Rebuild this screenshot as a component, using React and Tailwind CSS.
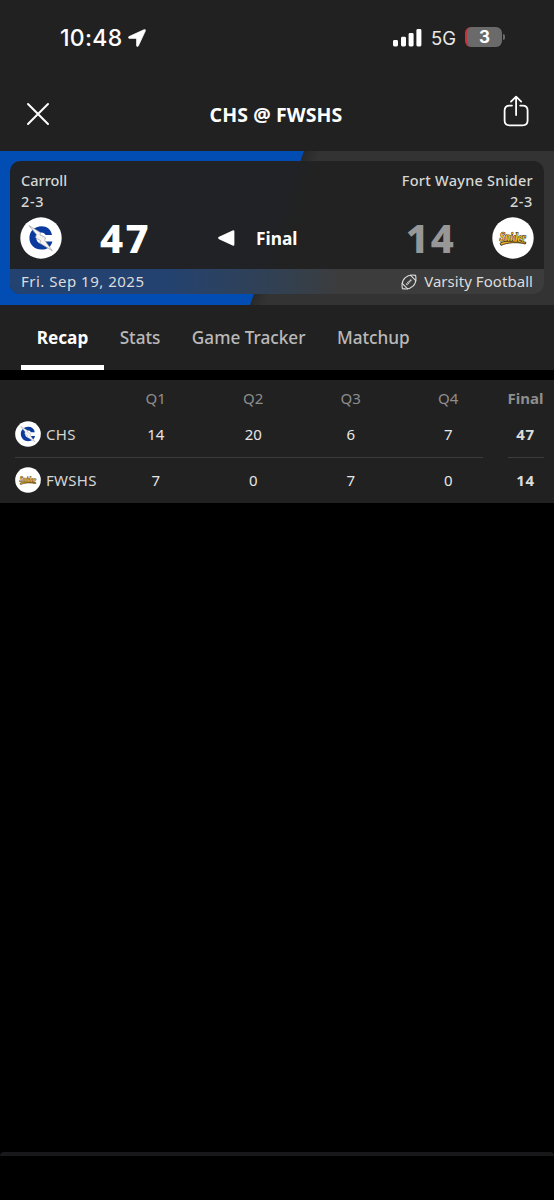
import React from 'react';

const TABS = ['Recap', 'Stats', 'Game Tracker', 'Matchup'];

const QUARTERS = ['Q1', 'Q2', 'Q3', 'Q4'];

const TEAMS = [
  { id: 'chs', short: 'CHS', quarters: [14, 20, 6, 7], final: 47 },
  { id: 'fwshs', short: 'FWSHS', quarters: [7, 0, 7, 0], final: 14 },
];

function CarrollLogo({ className }) {
  return (
    <svg viewBox="0 0 42 42" className={className}>
      <circle cx="21" cy="21" r="20.7" fill="#fff" />
      <path
        d="M32 18C31 12.4 27 9.3 21.6 9.3C14.6 9.3 9.4 14.3 9.4 21C9.4 27.7 14.6 32.6 21.6 32.6C27 32.6 31.2 29.6 32.4 24.4H25.4C24.6 25.8 23.4 26.6 21.6 26.6C18.6 26.6 16.4 24.2 16.4 21C16.4 17.8 18.6 15.4 21.6 15.4C23.4 15.4 24.8 16.4 25.6 18Z"
        fill="#0b3a9e"
      />
      <path
        d="M9 8.6L20.4 15.4L20 17.8L25.4 20.6L24.8 23.4L32.4 33.8L19.8 26.2L20.6 23.6L15.4 20.6L16.4 17.6Z"
        fill="#f4f4f2"
        stroke="#8d8f94"
        strokeWidth="0.6"
        strokeLinejoin="round"
      />
    </svg>
  );
}

function SniderLogo({ className }) {
  return (
    <svg viewBox="0 0 42 42" className={className}>
      <circle cx="21" cy="21" r="20.7" fill="#fff" />
      <path
        d="M8 26.2C14 22.8 26 22.6 34 25.4L33.4 27C25 24.8 15.5 25.4 9 28.4Z"
        fill="#e9ac26"
        stroke="#2b2110"
        strokeWidth="0.8"
      />
      <g
        transform="rotate(3 21 21)"
        fontFamily="'Liberation Serif', serif"
        fontStyle="italic"
        fontWeight="700"
        fill="#f7be2c"
        stroke="#2b2110"
        strokeWidth="1.1"
        strokeLinejoin="round"
        paintOrder="stroke"
      >
        <text x="7.6" y="24.4" fontSize="13" textLength="26" lengthAdjust="spacingAndGlyphs">
          Snider
        </text>
      </g>
    </svg>
  );
}

function TeamLogo({ team, className }) {
  return team === 'chs' ? <CarrollLogo className={className} /> : <SniderLogo className={className} />;
}

function StatusBar() {
  return (
    <div className="flex h-[76px] items-center justify-between pl-[60px] pr-[49px] font-['Inter',sans-serif] text-white">
      <div className="flex items-center gap-[6px]">
        <span className="pt-px text-[23px] font-medium leading-none tracking-[0.3px]">10:48</span>
        <svg viewBox="0 0 18 18" className="h-[18px] w-[18px]">
          <path
            d="M16.2 0.6L0.9 7.6C0 8.1 0.3 9.4 1.3 9.4H7.9Q8.5 9.4 8.5 10V16.5C8.5 17.7 9.9 17.9 10.4 16.9L17.4 1.9C17.8 0.9 17.1 0.2 16.2 0.6Z"
            fill="currentColor"
            stroke="currentColor"
            strokeWidth="0.6"
          />
        </svg>
      </div>
      <div className="flex items-center">
        <svg viewBox="0 0 29 18" className="h-[18px] w-[29px]" fill="currentColor">
          <rect x="0" y="11" width="5" height="6.5" rx="1.4" />
          <rect x="8" y="7.8" width="5" height="9.7" rx="1.4" />
          <rect x="15.6" y="4" width="5" height="13.5" rx="1.4" />
          <rect x="23.4" y="0" width="5" height="17.5" rx="1.4" />
        </svg>
        <span className="ml-[9px] pt-px text-[18.5px] leading-none text-[#e8e8e8]">5G</span>
        <div className="ml-[9px] flex items-center gap-px">
          <div className="mb-[2px] flex h-[20px] w-[37px] items-center justify-center overflow-hidden rounded-[6px] border-l-2 border-[#c8323a] bg-[#6a6a6a] text-[17px] font-bold leading-none">
            3
          </div>
          <div className="mb-[2px] h-[6px] w-[2px] rounded-r-full bg-[#6a6a6a]" />
        </div>
      </div>
    </div>
  );
}

function TitleBar() {
  return (
    <div className="flex h-[75px] items-center justify-between pl-[26px] pr-[24px] text-white">
      <svg viewBox="0 0 24 24" className="h-6 w-6" stroke="currentColor" strokeWidth="2" strokeLinecap="round">
        <path d="M2 2L22 22M22 2L2 22" />
      </svg>
      <h1 className="pt-[2px] text-[19.5px] font-bold leading-none tracking-[0.1px]">CHS @ FWSHS</h1>
      <svg
        viewBox="0 0 28 32"
        className="mb-[6px] h-8 w-7"
        fill="none"
        stroke="currentColor"
        strokeWidth="1.8"
        strokeLinecap="round"
        strokeLinejoin="round"
      >
        <path d="M10 10.6H7.6C4.2 10.6 2.6 12.2 2.6 15.4V25.6C2.6 28.8 4.2 30.4 7.6 30.4H20.6C24 30.4 25.6 28.8 25.6 25.6V15.4C25.6 12.2 24 10.6 20.6 10.6H18.2" />
        <path d="M14.1 20V1.8M9 6.6L14.1 1.6L19.2 6.6" />
      </svg>
    </div>
  );
}

function FootballIcon() {
  return (
    <svg
      viewBox="0 0 16 16"
      className="h-4 w-4"
      fill="none"
      stroke="currentColor"
      strokeWidth="1.1"
      strokeLinecap="round"
      strokeLinejoin="round"
    >
      <path d="M1.4 14.6C0.4 9.5 1.2 6.4 4 3.8C7 1 10.5 0.6 14.6 1.4C15.5 6 14.8 9.4 12 12.2C9.2 14.9 5.5 15.6 1.4 14.6Z" />
      <path d="M9.4 1.2L14.8 6.6M1.2 9.4L6.6 14.8" />
      <path d="M5.4 10.7L10.6 5.5" strokeWidth="2" strokeDasharray="1.2 0.6" strokeLinecap="butt" />
    </svg>
  );
}

function ScoreBanner() {
  return (
    <section className="relative h-[154px] bg-[#333333] p-[10px] pb-[11px]">
      <svg viewBox="0 0 554 154" className="absolute inset-0 h-full w-full">
        <defs>
          <linearGradient id="edge" gradientUnits="userSpaceOnUse" x1="277" y1="77" x2="291" y2="82">
            <stop offset="0" stopColor="#222" stopOpacity="0.6" />
            <stop offset="1" stopColor="#222" stopOpacity="0" />
          </linearGradient>
        </defs>
        <path d="M304 0H330L276 154H250Z" fill="url(#edge)" />
        <path d="M0 0H304L250 154H0Z" fill="#024db4" />
      </svg>
      <div className="relative flex h-full flex-col overflow-hidden rounded-[10px] bg-linear-[109deg] from-[#202226] from-49% to-[#222222] to-53%">
        <div className="flex justify-between px-[11px] pt-[9px] text-[14.5px] font-medium leading-[20.5px] text-[#d6d6d6]">
          <div>
            <p>Carroll</p>
            <p className="tracking-[0.6px]">2-3</p>
          </div>
          <div className="text-right">
            <p className="tracking-[0.25px]">Fort Wayne Snider</p>
            <p className="tracking-[0.6px]">2-3</p>
          </div>
        </div>
        <div className="flex h-[58px] items-center pl-[10px] pr-[10px] pb-[4px]">
          <CarrollLogo className="h-[42px] w-[42px]" />
          <span className="ml-[38px] w-[50px] text-[40px] font-extrabold leading-none tracking-[2.5px] text-white">47</span>
          <svg viewBox="0 0 17 16" className="ml-[68px] h-4 w-[17px]" fill="#fff">
            <path d="M1 6.8L14.6 0.4Q16.4 -0.2 16.4 1.6V14.4Q16.4 16.2 14.6 15.6L1 9.2Q-0.8 8 1 6.8Z" />
          </svg>
          <span className="ml-[21px] pt-[2px] text-[17.3px] font-bold text-white">Final</span>
          <span className="ml-auto text-[40px] font-extrabold leading-none tracking-[2px] text-[#979797]">14</span>
          <SniderLogo className="ml-[36px] h-[42px] w-[42px]" />
        </div>
        <div className="flex flex-1 items-center justify-between bg-linear-to-r from-[#24426f] from-30% via-[#33404f] via-52% to-[#3c3c3c] to-62% px-[11px] text-[15px] leading-none text-[#dcdcdc]">
          <span className="tracking-[0.5px]">Fri. Sep 19, 2025</span>
          <span className="flex items-center gap-[7px] tracking-[0.05px]">
            <FootballIcon />
            Varsity Football
          </span>
        </div>
      </div>
    </section>
  );
}

function TabBar() {
  return (
    <nav className="flex h-[65px] bg-[#212121] pl-[21px] text-[17.2px]">
      {TABS.map((tab, i) => (
        <div
          key={tab}
          className={`flex items-center px-[15.7px] ${
            i === 0 ? 'border-b-[5px] border-white pt-[5px] font-bold text-white' : 'font-medium text-[#b9b9b9]'
          }`}
        >
          {tab}
        </div>
      ))}
    </nav>
  );
}

function ScoreRow({ team }) {
  return (
    <div className="flex h-[42px] items-center">
      <div className="flex w-[92px] items-center gap-[5px]">
        <TeamLogo team={team.id} className="h-[26px] w-[26px] shrink-0" />
        <span className="tracking-[0.3px] text-[#d6d6d6]">{team.short}</span>
      </div>
      {team.quarters.map((points, i) => (
        <span key={i} className="w-[97.5px] text-center text-[#e6e6e6]">{points}</span>
      ))}
      <span className="ml-[8px] w-[41px] text-center font-bold tracking-[0.6px] text-[#dcdcdc]">{team.final}</span>
    </div>
  );
}

function BoxScore() {
  return (
    <section className="h-[123px] bg-[#212121] pl-[15px] text-[15px]">
      <div className="flex h-[33px] items-center pl-[92px] pt-[3px] text-[#8e8e8e]">
        {QUARTERS.map((q) => (
          <span key={q} className="w-[97.5px] text-center">{q}</span>
        ))}
        <span className="ml-[8px] w-[41px] text-center font-bold">Final</span>
      </div>
      <ScoreRow team={TEAMS[0]} />
      <div className="flex gap-[25px] pt-[2px] pb-px">
        <div className="h-px w-[468px] bg-[#3c3c3c]" />
        <div className="h-px w-[36px] bg-[#3c3c3c]" />
      </div>
      <ScoreRow team={TEAMS[1]} />
    </section>
  );
}

export default function App() {
  return (
    <div className="flex h-[1200px] w-[554px] flex-col overflow-hidden bg-black font-['Noto_Sans',sans-serif]">
      <header className="bg-[#212121]">
        <StatusBar />
        <TitleBar />
      </header>
      <ScoreBanner />
      <TabBar />
      <main className="flex-1 pt-[10px]">
        <BoxScore />
      </main>
      <footer className="h-[48px] rounded-t-[4px] border-t-[4px] border-[#18181a]" />
    </div>
  );
}
